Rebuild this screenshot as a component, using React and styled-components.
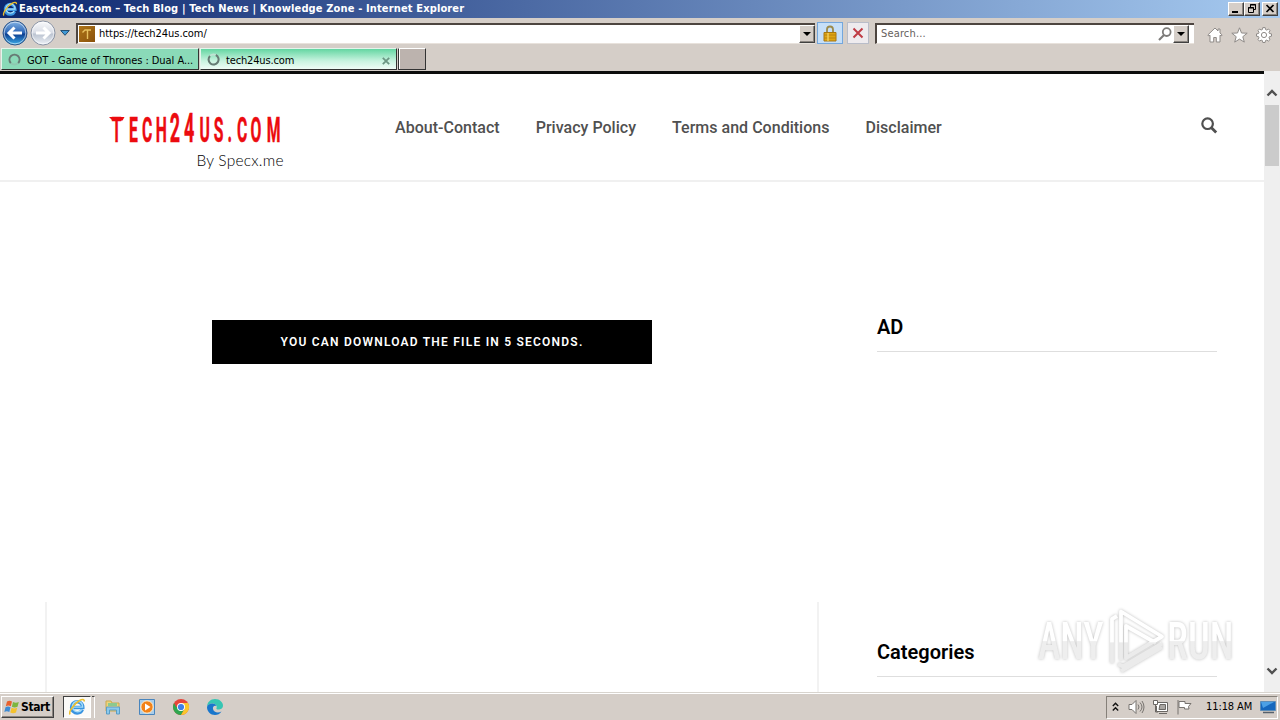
import styled, { createGlobalStyle, css } from 'styled-components';

const GlobalStyle = createGlobalStyle`
    * {
        box-sizing: border-box;
    }

    body {
        margin: 0;
        overflow: hidden;
        background: #fff;
    }

    svg {
        flex-shrink: 0;
    }
`;

const chrome = '#d5cec8';

const raised = css`
    border: 1px solid;
    border-color: #fff #404040 #404040 #fff;
    box-shadow: inset -1px -1px 0 #8a8580;
    background: ${chrome};
`;

const Desktop = styled.div`
    display: flex;
    flex-direction: column;
    width: 1280px;
    height: 720px;
    font-family: 'DejaVu Sans Condensed', 'DejaVu Sans', sans-serif;
    font-stretch: condensed;
    font-size: 11px;
    color: #000;
`;

const Label = styled.span`
    white-space: nowrap;
    line-height: 14px;
    letter-spacing: ${({ $spacing }) => $spacing || 0}px;
    font-size: ${({ $size }) => $size || 11}px;
    font-weight: ${({ $bold }) => ($bold ? 700 : 400)};
    color: ${({ $color }) => $color || 'inherit'};
`;

const TitleBar = styled.header`
    display: flex;
    align-items: center;
    height: 18px;
    padding: 0 2px 0 2px;
    gap: 1px;
    color: #fff;
    background: linear-gradient(90deg, #0d276f, #a6caf0);
`;

const WindowButtons = styled.div`
    display: flex;
    margin-left: auto;
`;

const WindowButton = styled.div`
    ${raised}
    display: flex;
    width: 16px;
    height: 14px;
    margin-left: ${({ $gap }) => $gap || 0}px;
`;

const AddressRow = styled.div`
    display: flex;
    align-items: center;
    height: 29px;
    padding: 1px 6px 0 2px;
    background: ${chrome};
`;

const Field = styled.div`
    display: flex;
    align-items: center;
    width: ${({ $width }) => $width}px;
    height: 21px;
    margin-left: ${({ $left }) => $left}px;
    padding: 0 ${({ $right }) => $right || 0}px 0 ${({ $inset }) => $inset || 1}px;
    background: #fff;
    border-top: 2px solid #4d4540;
    border-left: 2px solid #4d4540;
    border-bottom: 1px solid #e8e2dc;
`;

const Favicon = styled.div`
    display: flex;
    width: 16px;
    height: 16px;
    margin-right: 4px;
    background: linear-gradient(135deg, #ae7418, #8a520c);
`;

const DropButton = styled.div`
    ${raised}
    display: flex;
    align-items: center;
    justify-content: center;
    width: 16px;
    height: 18px;
    margin-left: ${({ $auto }) => ($auto ? 'auto' : '1px')};
`;

const ToolButton = styled.div`
    display: flex;
    align-items: center;
    justify-content: center;
    width: ${({ $width }) => $width}px;
    height: 22px;
    margin-left: ${({ $left }) => $left}px;
    border: 1px solid ${({ $active }) => ($active ? '#74a7dd' : '#b9bdc9')};
    background: ${({ $active }) => ($active ? '#c6dff8' : '#eeebee')};
`;

const CommandIcons = styled.div`
    display: flex;
    gap: 8px;
    margin: 3px 0 0 13px;
`;

const TabRow = styled.div`
    display: flex;
    height: 24px;
    padding: 1px 1px 1px;
    gap: 1px;
    background: ${chrome};
`;

const Tab = styled.div`
    display: flex;
    align-items: center;
    width: ${({ $width }) => $width}px;
    height: 22px;
    padding: 3px 6px 0 6px;
    gap: 6px;
    border: 1px solid;
    border-color: #e4f5ec #333 #333 #e4f5ec;
    background: ${({ $active }) => ($active ? 'linear-gradient(#64d6a2, #c9f3e0 60%, #effcf6)' : '#8adab8')};

    svg:last-child:not(:first-child) {
        margin-left: auto;
    }
`;

const NewTab = styled.div`
    width: 28px;
    height: 22px;
    border: 1px solid;
    border-color: #fff #333 #333 #333;
    box-shadow: inset 1px 0 #fff;
    background: #bcb3ae;
`;

const Viewport = styled.div`
    display: flex;
    height: 621px;
`;

const Page = styled.div`
    width: 1264px;
    height: 621px;
    overflow: hidden;
    background: #fff;
    border-top: 3px solid #0c0d0c;
    font-family: Roboto, sans-serif;
    font-stretch: normal;
`;

const SiteHeader = styled.div`
    display: flex;
    height: 108px;
    padding-right: 46px;
    border-bottom: 2px solid #f0f0f0;
`;

const LogoBox = styled.div`
    padding: 31px 0 0 106px;
    width: 395px;
`;

const Nav = styled.nav`
    display: flex;
    gap: 36px;
    padding-top: 44px;
    font-size: 16px;
    line-height: 19px;
    font-weight: 500;
    letter-spacing: 0.02px;
    color: #505050;
    white-space: nowrap;
`;

const SearchLink = styled.div`
    margin: 42px 0 0 auto;
`;

const Columns = styled.div`
    display: flex;
    justify-content: space-between;
    height: 510px;
    padding: 0 47px 0 45px;
`;

const MainColumn = styled.main`
    display: flex;
    flex-direction: column;
    justify-content: space-between;
    align-items: center;
    width: 774px;
    padding-top: 138px;
`;

const Download = styled.div`
    width: 440px;
    height: 44px;
    background: #000;
    color: #fff;
    font-size: 12px;
    font-weight: 600;
    line-height: 44px;
    letter-spacing: 1.22px;
    text-align: center;
`;

const Card = styled.div`
    width: 774px;
    height: 90px;
    border: solid #f2f2f2;
    border-width: 0 2px;
`;

const Aside = styled.aside`
    width: 340px;
    padding-top: 133px;
`;

const WidgetTitle = styled.h3`
    height: 37px;
    margin: 0 0 288px;
    border-bottom: 1px solid #dedede;
    font-size: 20px;
    line-height: 24px;
    font-weight: 600;
    color: #000;
`;

const Scrollbar = styled.div`
    display: flex;
    flex-direction: column;
    align-items: center;
    width: 16px;
    height: 621px;
    padding: 15px 0 14px;
    background: #efefef;
`;

const Thumb = styled.div`
    width: 14px;
    height: 61px;
    margin: 5px 0 auto 0;
    background: #cbcbcb;
`;

const Watermark = styled.svg`
    position: absolute;
    left: 1030px;
    top: 602px;
    overflow: visible;
    filter: drop-shadow(0 0 1.5px rgba(0, 0, 0, 0.26));
`;

const Taskbar = styled.footer`
    display: flex;
    align-items: center;
    height: 28px;
    padding: 1px 0 0 1px;
    border-top: 1px solid #d8d4ce;
    box-shadow: inset 0 1px #fff;
    background: ${chrome};
`;

const StartButton = styled.div`
    ${raised}
    display: flex;
    align-items: center;
    width: 53px;
    height: 22px;
    padding-left: 2px;
    gap: 1px;
`;

const TaskActive = styled.div`
    display: flex;
    align-items: center;
    justify-content: center;
    width: 28px;
    height: 22px;
    margin: 0 1px 0 9px;
    border: 1px solid;
    border-color: #404040 #fff #fff #404040;
    background: #fbfaf8;
`;

const TaskMark = styled.div`
    width: 3px;
    height: 22px;
    border: solid #404040;
    border-width: 1px 1px 0 0;
    border-right-color: #fff;
`;

const Launchers = styled.div`
    display: flex;
    gap: 16px;
    margin-left: 9px;
`;

const Tray = styled.div`
    display: flex;
    align-items: center;
    width: 172px;
    height: 23px;
    margin: 0 2px 0 auto;
    padding-left: 5px;
    border: 1px solid;
    border-color: #858079 #fff #fff #858079;
`;

const TrayIcons = styled.div`
    display: flex;
    gap: 7px;
    margin: 0 13px 0 9px;
`;

const IeIcon = ({ size = 16 }) => (
    <svg width={size} height={size} viewBox="0 0 16 16" fill="none">
        <path d="M12.8 10.3A5 5 0 1 1 13.2 8.4H4.5" stroke="#3a94e0" strokeWidth="3" />
        <path d="M12.2 10.2A4.6 4.6 0 1 1 13 8.1H4" stroke="#a5dcf8" strokeWidth="1.3" />
        <path d="M2 14.5C-.3 13 5.5 5 10 2.4c2.5-1.4 4.7-1.5 4.4.7" stroke="#edbf2c" strokeWidth="1.4" />
    </svg>
);

const NavBall = ({ forward }) => (
    <svg width="26" height="26" viewBox="0 0 26 26">
        <defs>
            <linearGradient id={forward ? 'ballF' : 'ballB'} x1="0" y1="0" x2="0" y2="1">
                <stop offset="0" stopColor={forward ? '#fafafc' : '#84b4e6'} />
                <stop offset=".48" stopColor={forward ? '#d9dde6' : '#2d66b6'} />
                <stop offset=".55" stopColor={forward ? '#bcc4d1' : '#0d3f91'} />
                <stop offset="1" stopColor={forward ? '#eef2f8' : '#3db0ec'} />
            </linearGradient>
        </defs>
        <circle cx="13" cy="13" r="12" fill={`url(#${forward ? 'ballF' : 'ballB'})`} stroke={forward ? '#8b94a5' : '#315688'} />
        <circle cx="13" cy="13" r="10.8" fill="none" stroke="#fff" strokeOpacity=".55" />
        <path
            d="M7 13h13M12.5 7.5 7 13l5.5 5.5"
            transform={forward ? 'rotate(180 13 13)' : undefined}
            fill="none"
            stroke="#fff"
            strokeWidth="3"
        />
    </svg>
);

const Arrow = () => (
    <svg width="8" height="4">
        <path d="M0 0h8L4 4z" fill="#000" />
    </svg>
);

const Spinner = ({ open }) => (
    <svg width="13" height="15" viewBox="0 0 13 15" fill="none">
        <circle cx="6.5" cy="6.5" r="5" stroke={open ? '#bfe2d3' : '#8ec8b0'} strokeWidth="2" />
        <path d={open ? 'M8.8 2A5 5 0 1 1 3 3' : 'M2.8 10A5 5 0 1 1 10.2 10'} stroke="#667b74" strokeWidth="2" />
    </svg>
);

const Glass = () => (
    <svg width="14" height="14" viewBox="0 0 14 14" fill="none" stroke="#7d7b79" strokeWidth="1.8">
        <circle cx="8.7" cy="5.1" r="3.9" />
        <path d="M6 8 1 13" strokeWidth="2.2" />
    </svg>
);

const Chevron = ({ down }) => (
    <svg width="12" height="14" viewBox="0 0 12 14" fill="none" stroke="#505050" strokeWidth="2.4">
        <path d={down ? 'M1.5 4.5 6 9l4.5-4.5' : 'M1.5 9.5 6 5l4.5 4.5'} />
    </svg>
);

// the wordmark is squeezed horizontally, so every pen position is divided by the same factor
const squeeze = 0.45;
const pens = [111.7, 129, 142, 155.8, 169.8, 184, 199.4, 213.8, 227.4, 237, 250.6, 266.8]
    .map((x) => (x - 106) / squeeze)
    .join(' ');

const Logo = () => (
    <svg width="190" height="70" overflow="visible">
        <text
            transform={`translate(0 37) scale(${squeeze} 1)`}
            x={pens}
            fill="#ec0b0f"
            stroke="#ec0b0f"
            strokeWidth="0.5"
            fontFamily="Roboto, sans-serif"
            fontWeight="700"
            fontSize="35"
        >
            TECH<tspan fontSize="40">24</tspan>US.COM
        </text>
        <path d="M3 12h15.5l-2 3.5H6.5z" fill="#ec0b0f" />
        <text x="90.5" y="61" fill="#000" fontFamily="Lato, sans-serif" fontWeight="300" fontSize="15.5" textLength="87">
            By Specx.me
        </text>
    </svg>
);

const AnyRun = () => (
    <Watermark width="210" height="76" viewBox="0 0 210 76">
        <defs>
            <linearGradient id="fade" gradientUnits="userSpaceOnUse" x1="0" y1="0" x2="0" y2="76">
                <stop offset=".52" stopColor="#fff" />
                <stop offset=".54" stopColor="#ebebeb" />
            </linearGradient>
            <linearGradient id="fadeText" gradientUnits="userSpaceOnUse" x1="0" y1="-37" x2="0" y2="0">
                <stop offset=".5" stopColor="#fff" />
                <stop offset=".53" stopColor="#eee" />
            </linearGradient>
        </defs>
        <g fontFamily="Roboto, sans-serif" fontSize="52" fontWeight="500" fill="url(#fadeText)">
            <text transform="translate(8 57) scale(.73 1)">ANY</text>
            <text transform="translate(137 57) scale(.74 1)">RUN</text>
        </g>
        <g fill="none" stroke="url(#fade)" strokeWidth="3.8" strokeLinejoin="round">
            <path d="M82 61V17l5-3" />
            <path d="M91 58V9.5l41 25-36 21.500V24l30 17" />
            <path d="m88 62 5 2.500 39-23M91 69l41-24" />
        </g>
    </Watermark>
);

const BrowserChrome = () => (
    <>
        <TitleBar>
            <IeIcon />
            <Label $bold $spacing={0.14}>
                Easytech24.com – Tech Blog | Tech News | Knowledge Zone - Internet Explorer
            </Label>
            <WindowButtons>
                <WindowButton>
                    <svg width="14" height="12"><path d="M3 8h6v2H3z" /></svg>
                </WindowButton>
                <WindowButton>
                    <svg width="14" height="12" fill="none" stroke="#000">
                        <path d="M5.5 4V1.5h5v5H9M5 2h6M3.5 4.5h5v5h-5zM3 5h6" />
                    </svg>
                </WindowButton>
                <WindowButton $gap={2}>
                    <svg width="14" height="12"><path d="m3.5 2 7 7m0-7-7 7" stroke="#000" strokeWidth="1.7" /></svg>
                </WindowButton>
            </WindowButtons>
        </TitleBar>
        <AddressRow>
            <NavBall />
            <svg width="2" height="26" />
            <NavBall forward />
            <svg width="10" height="6" style={{ marginLeft: 4 }}>
                <path d="M.7.5h8.6L5 5.3z" fill="#4099d5" stroke="#234e72" />
            </svg>
            <Field $width={739} $left={6}>
                <Favicon>
                    <svg width="16" height="16" fill="none" stroke="#e8c160" strokeWidth="1.4">
                        <path d="M3.5 6.5 6 4h6M8.5 4v9" />
                    </svg>
                </Favicon>
                <Label $spacing={-0.05}>https://tech24us.com/</Label>
                <DropButton $auto><Arrow /></DropButton>
            </Field>
            <ToolButton $active $width={26} $left={2}>
                <svg width="14" height="17" viewBox="0 0 14 17">
                    <path d="M4 8V4.500a3 3 0 0 1 6 0V8" fill="none" stroke="#9b8a4c" strokeWidth="1.8" />
                    <path d="M1 7.500h12V16H1z" fill="#dfa514" stroke="#a77712" />
                    <path d="M1 10h12M1 13h12" stroke="#b98410" />
                    <path d="M5 8v8" stroke="#f4d15e" strokeWidth="1.4" />
                </svg>
            </ToolButton>
            <ToolButton $width={22} $left={4}>
                <svg width="12" height="12"><path d="m1.5 1.5 9 9m0-9-9 9" stroke="#bf3c45" strokeWidth="2" /></svg>
            </ToolButton>
            <Field $width={319} $left={6} $right={5} $inset={4}>
                <Label $color="#66615d" $spacing={0.15}>Search...</Label>
                <svg width="1" height="1" style={{ marginLeft: 'auto' }} />
                <Glass />
                <DropButton><Arrow /></DropButton>
            </Field>
            <CommandIcons>
                <svg width="16" height="16" viewBox="0 0 16 16" fill="#fff" stroke="#8f8b88">
                    <path d="M8 1 .8 8l1 1L3 8.2V15h3.700v-4.500h2.600V15H13V8.200l1.200.8 1-1-2.200-2V2h-2v2z" />
                </svg>
                <svg width="17" height="16" viewBox="0 0 17 16" fill="#fff" stroke="#8f8b88">
                    <path d="m8.500.8 2 5.200 5.700.2-4.400 3.500 1.500 5.400-4.800-3-4.800 3 1.500-5.400L.8 6.200 6.500 6z" />
                </svg>
                <svg width="16" height="16" viewBox="0 0 16 16" stroke="#8f8b88" fill="#fff">
                    <path d="M6.800.6h2.400l.4 2 1.200.5L12.500 2 14 3.600l-1 1.700.5 1.200 2 .4v2.300l-2 .4-.5 1.200 1 1.700-1.600 1.600-1.700-1-1.200.5-.4 1.900H6.800l-.4-1.900-1.200-.5-1.700 1L2 12.500l1-1.700-.5-1.200-2-.4V6.900l2-.4.5-1.200-1-1.700L3.500 2l1.700 1 1.200-.5z" />
                    <circle cx="8" cy="8" r="2.600" />
                </svg>
            </CommandIcons>
        </AddressRow>
        <TabRow>
            <Tab $width={198}>
                <Spinner />
                <Label $spacing={-0.05}>GOT - Game of Thrones : Dual A...</Label>
            </Tab>
            <Tab $active $width={197}>
                <Spinner open />
                <Label $spacing={-0.15}>tech24us.com</Label>
                <svg width="8" height="8"><path d="m.8.8 6.400 6.400m0-6.400L.8 7.200" stroke="#6b9683" strokeWidth="1.8" /></svg>
            </Tab>
            <NewTab />
        </TabRow>
    </>
);

const Site = () => (
    <Page>
        <SiteHeader>
            <LogoBox><Logo /></LogoBox>
            <Nav>
                <span>About-Contact</span>
                <span>Privacy Policy</span>
                <span>Terms and Conditions</span>
                <span>Disclaimer</span>
            </Nav>
            <SearchLink>
                <svg width="18" height="18" viewBox="0 0 18 18" fill="none" stroke="#505050">
                    <circle cx="7.600" cy="7.700" r="5.300" strokeWidth="2.200" />
                    <path d="m11.200 11.500 5 5" strokeWidth="2.800" />
                </svg>
            </SearchLink>
        </SiteHeader>
        <Columns>
            <MainColumn>
                <Download>YOU CAN DOWNLOAD THE FILE IN 5 SECONDS.</Download>
                <Card />
            </MainColumn>
            <Aside>
                <WidgetTitle>AD</WidgetTitle>
                <WidgetTitle>Categories</WidgetTitle>
            </Aside>
        </Columns>
    </Page>
);

const BottomBar = () => (
    <Taskbar>
        <StartButton>
            <svg width="16" height="16" viewBox="0 0 16 16">
                <path d="M3 2.500c2-1.300 3.400-1 5 0L6.800 7.200c-1.800-1-3.200-1-5 0z" fill="#e8602c" />
                <path d="M9 3c2 1 3.600 1 5.800 0l-1.300 4.700c-2 1-3.600 1-5.600 0z" fill="#7cb63e" />
                <path d="M1.500 8.300c1.800-1 3.200-1 5 0L5.300 13c-1.700-1-3.200-1-5 0z" fill="#3d8bd4" />
                <path d="M7.600 8.800c2 1 3.500 1 5.600 0L12 13.500c-2 1-3.800 1-5.700 0z" fill="#f4c22e" />
            </svg>
            <Label $bold $size={12} $spacing={-0.4}>Start</Label>
        </StartButton>
        <TaskActive><IeIcon size={18} /></TaskActive>
        <TaskMark />
        <Launchers>
            <svg width="18" height="18" viewBox="0 0 18 18">
                <path d="M2 3h5l1 2h7v8H2z" fill="#edd37b" stroke="#c9a94e" />
                <path d="M4 5h9v3H4z" fill="#8cc98e" />
                <path d="M2.500 16V9h13v7h-3v-4h-7v4z" fill="#8bc9ec" stroke="#5a9dc6" />
            </svg>
            <svg width="18" height="18" viewBox="0 0 18 18">
                <path d="M1.500 1.500h15v15h-15z" fill="#a9cdea" stroke="#4985bd" />
                <circle cx="9" cy="9" r="6.200" fill="#f28218" stroke="#fff3d8" />
                <path d="m7 5.500 5.500 3.500L7 12.500z" fill="#fff" />
            </svg>
            <svg width="18" height="18" viewBox="0 0 18 18">
                <circle cx="9" cy="9" r="8" fill="#e6453a" />
                <path d="M2 5.100A8 8 0 0 0 9 17l3.500-6L9 9H4.300z" fill="#2fa650" />
                <path d="M9 17a8 8 0 0 0 7-12H9l3.500 6z" fill="#fbc62c" />
                <circle cx="9" cy="9" r="4" fill="#fff" />
                <circle cx="9" cy="9" r="3.100" fill="#3f7fe8" />
            </svg>
            <svg width="18" height="18" viewBox="0 0 18 18">
                <path d="M1 9C1 4 4.600 1 9 1c5 0 8 3.500 8 6.500 0 3-2.500 4-4.500 4-1.500 0-2.500-.5-2-1.500C11.500 8 9.500 5.500 6.500 5.500 3.500 5.500 1.500 7 1 9z" fill="#36c5b3" />
                <path d="M1 9c.5-2 2.500-3.500 5.500-3.500 2 0 3.500 1 4 2.500C8 7 6.500 9 7 11c.6 3 4.500 4.500 8.500 2.500C14 16 11.500 17 9 17c-4.500 0-8-3.500-8-8z" fill="#1976cc" />
            </svg>
        </Launchers>
        <Tray>
            <svg width="7" height="10" fill="none" stroke="#111" strokeWidth="1.4">
                <path d="m.8 4 2.700-2.700L6.200 4M.8 8.500l2.700-2.700 2.700 2.700" />
            </svg>
            <TrayIcons>
                <svg width="17" height="16" viewBox="0 0 17 16" fill="none" stroke="#77736f">
                    <path d="M1 5.500h3l4-4v13l-4-4H1z" fill="#fff" />
                    <path d="M10 5.500q2 2.500 0 5M12 3.500q4 4.500 0 9M14 2q4 6 0 12" />
                </svg>
                <svg width="17" height="16" viewBox="0 0 17 16" stroke="#6b6763">
                    <path d="M6 3.500h9.500v9H4.500V7" fill="#fff" />
                    <path d="M8 5.500h5.500v5H7z" fill="#aaa6a2" />
                    <path d="M1.500 1.500h4v4h-4zM3.500 6v7M7 14.500h8M3.500 13H6" fill="#fff" />
                </svg>
                <svg width="17" height="16" viewBox="0 0 17 16" fill="#fff" stroke="#77736f">
                    <path d="M2 1v14.500M3 2.500h6v2h6l-2.500 3 .5 2.500H8.500V8.500H3z" />
                </svg>
            </TrayIcons>
            <Label $spacing={-0.1}>11:18 AM</Label>
            <svg width="16" height="14" viewBox="0 0 16 14" style={{ marginLeft: 8 }}>
                <path d="M.5 1.500h15v9H.5z" fill="#1667bd" stroke="#5d8db8" />
                <path d="M1 2h13L3 8z" fill="#4ca0e5" />
                <path d="M3 12.500h11" stroke="#56616d" strokeWidth="1.500" />
            </svg>
        </Tray>
    </Taskbar>
);

const App = () => (
    <>
        <GlobalStyle />
        <Desktop>
            <BrowserChrome />
            <Viewport>
                <Site />
                <Scrollbar>
                    <Chevron />
                    <Thumb />
                    <Chevron down />
                </Scrollbar>
            </Viewport>
            <BottomBar />
            <AnyRun />
        </Desktop>
    </>
);

export default App;
